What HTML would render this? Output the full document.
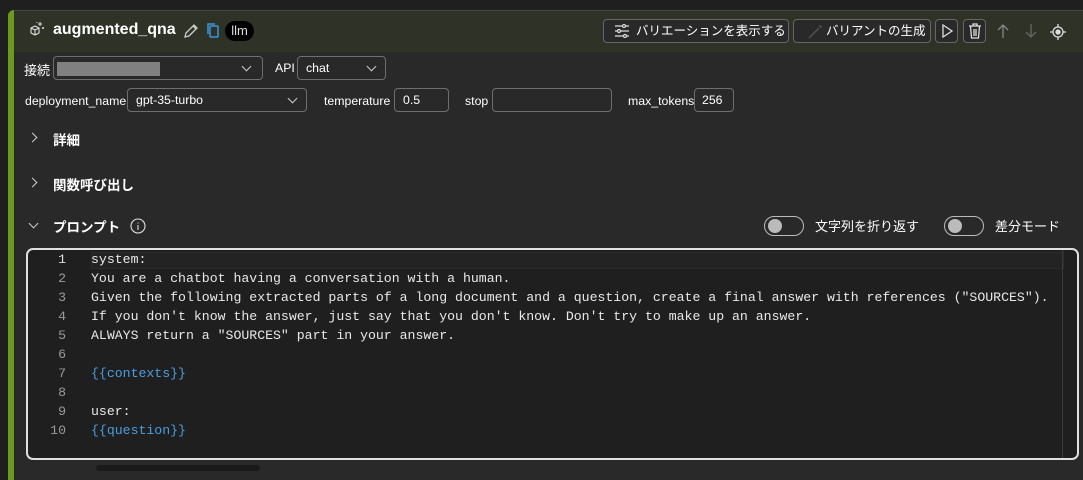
<!DOCTYPE html>
<html><head><meta charset="utf-8"><style>
*{box-sizing:border-box;margin:0;padding:0}
body{width:1083px;height:469px;background:#1f1f1f;font-family:"Liberation Sans","Noto Sans CJK JP",sans-serif;color:#fff;position:relative;overflow:hidden;font-size:12.3px}
.a{position:absolute;white-space:nowrap}
.card{position:absolute;left:8px;top:10px;width:1080px;height:470px;background:#292929;border-top:1px solid #444;border-radius:6px 0 0 0;overflow:hidden}
.green{position:absolute;left:8px;top:10px;width:6px;height:470px;background:#6b9a1f;border-radius:6px 0 0 0}
.head{position:absolute;left:14px;top:11px;width:1069px;height:41px;background:#2f3227}
.box{position:absolute;border:1px solid #6e6e6e;border-radius:4px;background:#292929}
.btn{position:absolute;border:1px solid #666;border-radius:4px;background:#292929;height:24px;top:19px;font-size:12.5px;line-height:22px;color:#fff}
.chev{position:absolute;width:7px;height:7px;border-right:1.2px solid #ccc;border-bottom:1.2px solid #ccc;transform:rotate(45deg)}
.mono{font-family:"Liberation Mono",monospace;font-size:13.2px;line-height:19px}
.num{position:absolute;left:30px;width:36px;text-align:right;color:#9a9a9a}
.ln{position:absolute;left:91px;color:#e8e8e8}
.tog{position:absolute;width:40px;height:20px;border:1px solid #bbb;border-radius:10px;top:216px}
.tog::after{content:"";position:absolute;left:3px;top:2px;width:14px;height:14px;border-radius:7px;background:#bbb}
.jp{font-size:13px}
</style></head><body>
<div class="card"></div>
<div class="head"></div>
<div class="green"></div>

<svg class="a" style="left:28px;top:20px" width="18" height="18" viewBox="0 0 18 18" fill="none" stroke="#ddd" stroke-width="1.1"><path d="M3 8l4-2 4 2v5l-4 2-4-2z M3 8l4 2 4-2 M7 10v5"/><path d="M12 2v4M10 4h4M15 7v2M14 8h2M9 2v1"/></svg>
<div class="a" style="left:53px;top:21px;font-size:16px;font-weight:bold">augmented_qna</div>
<svg class="a" style="left:182px;top:22px" width="18" height="18" viewBox="0 0 18 18" fill="none" stroke="#ccc" stroke-width="1.3"><path d="M3 15l1-4 8-8 3 3-8 8z M11 4l3 3"/></svg>
<svg class="a" style="left:205px;top:22px" width="16" height="17" viewBox="0 0 16 17" fill="none" stroke="#3a96dd" stroke-width="1.5"><rect x="5" y="4" width="8" height="11" rx="1"/><path d="M3 12V2h7"/></svg>
<div class="a" style="left:225px;top:21px;width:29px;height:20px;background:#000;border-radius:10px;font-size:13px;line-height:20px;text-align:center;color:#ddd">llm</div>

<div class="btn" style="left:603px;width:186px"><svg class="a" style="left:10px;top:4px" width="16" height="14" viewBox="0 0 16 14" stroke="#ddd" stroke-width="1.2" fill="none"><path d="M1 2h14M1 7h14M1 12h14"/><circle cx="10" cy="2" r="1.5" fill="#292929"/><circle cx="5" cy="7" r="1.5" fill="#292929"/><circle cx="11" cy="12" r="1.5" fill="#292929"/></svg><span class="a" style="left:32px">バリエーションを表示する</span></div>
<div class="btn" style="left:793px;width:138px"><svg class="a" style="left:13px;top:4px" width="16" height="16" viewBox="0 0 16 16" stroke="#555" stroke-width="1.3" fill="none"><path d="M2 14L12 4M13 1v2M15 3h-2"/></svg><span class="a" style="left:32px">バリアントの生成</span></div>
<div class="btn" style="left:935px;width:23px"><svg class="a" style="left:5px;top:4px" width="12" height="14" viewBox="0 0 12 14" fill="none" stroke="#ddd" stroke-width="1.3"><path d="M2 1l9 6-9 6z"/></svg></div>
<div class="btn" style="left:963px;width:23px"><svg class="a" style="left:4px;top:3px" width="14" height="16" viewBox="0 0 14 16" fill="none" stroke="#ddd" stroke-width="1.3"><path d="M1 3h12M5 3V1h4v2M2.5 3l1 12h7l1-12M6 6v7M8 6v7"/></svg></div>
<svg class="a" style="left:996px;top:23px" width="14" height="16" viewBox="0 0 14 16" fill="none" stroke="#888" stroke-width="1.3"><path d="M7 15V2M2 7l5-5 5 5"/></svg>
<svg class="a" style="left:1024px;top:23px" width="14" height="16" viewBox="0 0 14 16" fill="none" stroke="#666" stroke-width="1.3"><path d="M7 1v13M2 9l5 5 5-5"/></svg>
<svg class="a" style="left:1049px;top:23px" width="18" height="18" viewBox="0 0 18 18" fill="none" stroke="#ddd" stroke-width="1.3"><circle cx="9" cy="9" r="5"/><circle cx="9" cy="9" r="2" fill="#ddd"/><path d="M9 1v3M9 14v3M1 9h3M14 9h3"/></svg>

<div class="a jp" style="left:24px;top:60px">接続</div>
<div class="box" style="left:53px;top:56px;width:210px;height:24px"><div class="a" style="left:3px;top:5px;width:103px;height:14px;background:#808080"></div><div class="chev" style="left:189px;top:6px"></div></div>
<div class="a" style="left:275px;top:61px">API</div>
<div class="box" style="left:297px;top:56px;width:89px;height:24px"><span class="a" style="left:8px;top:4px">chat</span><div class="chev" style="left:70px;top:6px"></div></div>
<div class="a" style="left:25px;top:94px">deployment_name</div>
<div class="box" style="left:127px;top:88px;width:180px;height:24px"><span class="a" style="left:8px;top:4px">gpt-35-turbo</span><div class="chev" style="left:161px;top:6px"></div></div>
<div class="a" style="left:324px;top:94px">temperature</div>
<div class="box" style="left:394px;top:88px;width:55px;height:24px"><span class="a" style="left:8px;top:4px">0.5</span></div>
<div class="a" style="left:465px;top:94px">stop</div>
<div class="box" style="left:492px;top:88px;width:120px;height:24px"></div>
<div class="a" style="left:628px;top:94px">max_tokens</div>
<div class="box" style="left:694px;top:88px;width:40px;height:24px"><span class="a" style="left:7px;top:4px">256</span></div>

<div class="chev" style="left:29px;top:134px;transform:rotate(-45deg)"></div>
<div class="a" style="left:53px;top:129px;font-weight:bold;font-size:13.5px">詳細</div>
<div class="chev" style="left:29px;top:179px;transform:rotate(-45deg)"></div>
<div class="a" style="left:53px;top:174px;font-weight:bold;font-size:13.5px">関数呼び出し</div>
<div class="chev" style="left:30px;top:220px"></div>
<div class="a" style="left:53px;top:216px;font-weight:bold;font-size:13.5px">プロンプト</div>
<svg class="a" style="left:130px;top:218px" width="16" height="16" viewBox="0 0 16 16" fill="none" stroke="#ddd" stroke-width="1.1"><circle cx="8" cy="8" r="7"/><path d="M8 7v5M8 4.5v1"/></svg>

<div class="tog" style="left:764px"></div>
<div class="a jp" style="left:815px;top:216px">文字列を折り返す</div>
<div class="tog" style="left:944px"></div>
<div class="a jp" style="left:995px;top:216px">差分モード</div>

<div class="a" style="left:26px;top:248px;width:1053px;height:212px;border:2px solid #e0e0e0;border-radius:7px;background:#1f1f1f"></div>
<div class="a" style="left:91px;top:252px;width:973px;height:17px;background:#232323;border:1px solid #2c2c2c"></div>
<div class="a" style="left:1062px;top:250px;width:1px;height:208px;background:#3a3a3a"></div>
<div class="mono">
<div class="num" style="top:250px;color:#ddd">1</div><div class="ln" style="top:250px">system:</div>
<div class="num" style="top:269px">2</div><div class="ln" style="top:269px">You are a chatbot having a conversation with a human.</div>
<div class="num" style="top:288px">3</div><div class="ln" style="top:288px">Given the following extracted parts of a long document and a question, create a final answer with references ("SOURCES").</div>
<div class="num" style="top:307px">4</div><div class="ln" style="top:307px">If you don't know the answer, just say that you don't know. Don't try to make up an answer.</div>
<div class="num" style="top:326px">5</div><div class="ln" style="top:326px">ALWAYS return a "SOURCES" part in your answer.</div>
<div class="num" style="top:345px">6</div>
<div class="num" style="top:364px">7</div><div class="ln" style="top:364px;color:#4a9ee0">{{contexts}}</div>
<div class="num" style="top:383px">8</div>
<div class="num" style="top:402px">9</div><div class="ln" style="top:402px">user:</div>
<div class="num" style="top:421px">10</div><div class="ln" style="top:421px;color:#4a9ee0">{{question}}</div>
</div>
<div class="a" style="left:96px;top:465px;width:164px;height:6px;background:#1a1a1a;border-radius:3px"></div>
</body></html>
